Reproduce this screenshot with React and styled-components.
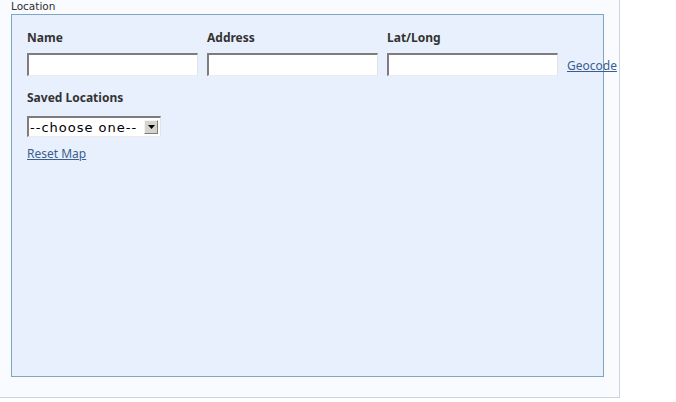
import React from "react"
import styled, { createGlobalStyle } from "styled-components"

const GlobalStyle = createGlobalStyle`
  html, body {
    margin: 0;
    padding: 0;
    background: #fff;
  }
  body {
    font-family: "Noto Sans", "DejaVu Sans", sans-serif;
    color: #333;
  }
`

const Panel = styled.div`
  width: 608px;
  height: 397px;
  background: #f9fbff;
  border-right: 1px solid #c8d5e4;
  border-bottom: 1px solid #c8d5e4;
  padding-left: 11px;
  box-sizing: content-box;
  display: flex;
  flex-direction: column;
`

const Legend = styled.div`
  font-family: "DejaVu Sans", sans-serif;
  font-size: 10.5px;
  line-height: 14px;
  height: 14px;
  color: #2f2f2f;
  margin-top: -1px;
`

const Box = styled.div`
  width: 593px;
  height: 363px;
  background: #e9f0fd;
  border: 1px solid #7fa6c0;
  padding: 14px 0 0 15px;
  box-sizing: border-box;
  margin-top: 1px;
`

const Row = styled.div`
  display: flex;
  align-items: ${(p) => p.$align || "flex-start"};
`

const Field = styled.div`
  display: flex;
  flex-direction: column;
  width: 171px;
  margin-right: 9px;
`

const Label = styled.label`
  font-size: 12px;
  font-weight: 700;
  line-height: 18px;
  color: #333;
  margin-bottom: ${(p) => p.$gap || 6}px;
`

const Input = styled.input`
  width: 171px;
  height: 23px;
  box-sizing: border-box;
  background: #fff;
  border-top: 2px solid #7d7d7d;
  border-left: 2px solid #7d7d7d;
  border-right: 1px solid #e3e3e3;
  border-bottom: 1px solid #ececec;
  padding: 0 3px;
  margin: 0;
  outline: none;
`

const Link = styled.a`
  font-size: 12px;
  line-height: 18px;
  color: #3b5e8f;
  text-decoration: underline;
  white-space: nowrap;
  cursor: pointer;
  margin-top: ${(p) => p.$top || 0}px;
  margin-bottom: ${(p) => p.$bottom || 0}px;
  align-self: ${(p) => p.$self || "flex-start"};
`

const Section = styled.div`
  display: flex;
  flex-direction: column;
  margin-top: ${(p) => p.$top || 0}px;
`

const SelectWrap = styled.div`
  display: flex;
  align-items: center;
  width: 134px;
  height: 21px;
  box-sizing: border-box;
  background: #fff;
  border-top: 2px solid #7d7d7d;
  border-left: 2px solid #7d7d7d;
  border-right: 1px solid #e3e3e3;
  border-bottom: 1px solid #ececec;
`

const Select = styled.select`
  appearance: none;
  -webkit-appearance: none;
  flex: 1;
  min-width: 0;
  height: 100%;
  border: none;
  background: transparent;
  font-family: "DejaVu Sans", sans-serif;
  font-size: 13px;
  letter-spacing: 1px;
  color: #000;
  padding: 0 0 0 1px;
  margin: 0;
  outline: none;
`

const Arrow = styled.span`
  width: 14px;
  height: 14px;
  margin-right: 2px;
  background: #d6d3ce;
  border-top: 1px solid #f4f4f4;
  border-left: 1px solid #f4f4f4;
  border-right: 1px solid #7d7d7d;
  border-bottom: 1px solid #7d7d7d;
  box-sizing: border-box;
  display: flex;
  align-items: center;
  justify-content: center;
`

export default function App() {
  return (
    <>
      <GlobalStyle />
      <Panel>
        <Legend>Location</Legend>
        <Box>
          <Row $align="flex-end">
            <Field>
              <Label>Name</Label>
              <Input type="text" />
            </Field>
            <Field>
              <Label>Address</Label>
              <Input type="text" />
            </Field>
            <Field>
              <Label>Lat/Long</Label>
              <Input type="text" />
            </Field>
            <Link $self="flex-end" $bottom={1}>Geocode</Link>
          </Row>
          <Section $top={13}>
            <Label $gap={9}>Saved Locations</Label>
            <SelectWrap>
              <Select defaultValue="">
                <option value="">--choose one--</option>
              </Select>
              <Arrow>
                <svg width="7" height="4" viewBox="0 0 7 4">
                  <path d="M0 0h7L3.5 4z" fill="#000" />
                </svg>
              </Arrow>
            </SelectWrap>
            <Link $top={8}>Reset Map</Link>
          </Section>
        </Box>
      </Panel>
    </>
  )
}
